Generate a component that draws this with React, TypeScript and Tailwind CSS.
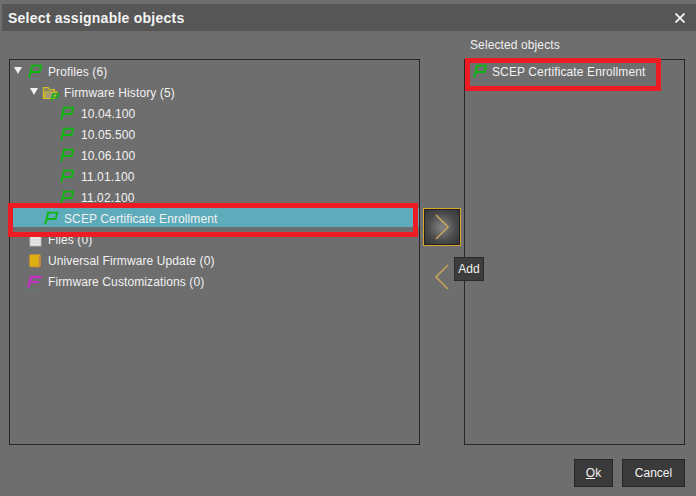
import React from "react";

const FONT = "font-['Liberation_Sans',Arial,sans-serif]";

function Flag({ color = "#0fb80f", large = false }: { color?: string; large?: boolean }) {
  return (
    <svg width="16" height="16" viewBox="0 0 16 16" fill="none">
      <path d="M6.4 1.6 H15.2 L13.6 8 H5.2" stroke={color} strokeWidth="1.8" strokeLinejoin="miter" />
      <path d="M6.4 0.8 L3.2 13.6" stroke={color} strokeWidth="2" />
      {large && <path d="M2 15 H12" stroke="#5b8a92" strokeWidth="0.9" />}
    </svg>
  );
}

function Folder() {
  return (
    <svg width="18" height="16" viewBox="0 0 18 16" fill="none">
      <path d="M1.5 13.5 V2.5 H6 L7.5 4.5 H12.5 V7" stroke="#d8c020" strokeWidth="1.2" fill="#8a8468" />
      <path d="M1.5 13.5 L4 7 H15 L12.5 13.5 Z" fill="#a39a78" stroke="#d8c020" strokeWidth="1.1" />
      <path d="M9.5 15.5 L11 9 H16.5 L15.6 12.5 H11" stroke="#0fb80f" strokeWidth="1.5" />
    </svg>
  );
}

function Doc() {
  return (
    <svg width="16" height="16" viewBox="0 0 16 16">
      <rect x="4" y="2" width="11" height="12" fill="#e6e6e6" stroke="#bdbdbd" strokeWidth="0.8" />
      <path d="M5.5 8H13.5M5.5 11H13.5" stroke="#d2d2d2" strokeWidth="1" />
    </svg>
  );
}

function Box() {
  return (
    <svg width="16" height="16" viewBox="0 0 16 16">
      <rect x="3.5" y="1.5" width="11" height="12.5" rx="1.5" fill="#dfae10" stroke="#bb8a3c" strokeWidth="1" />
      <path d="M13.3 2.5V13.5" stroke="#c48c40" strokeWidth="1.6" />
    </svg>
  );
}

function FIcon() {
  return (
    <svg width="16" height="16" viewBox="0 0 16 16" fill="none">
      <path d="M2.2 13.5 L5 3 H15.5" stroke="#c42cc4" strokeWidth="2.3" />
      <path d="M3.5 8 H12.5" stroke="#c42cc4" strokeWidth="2" />
      <path d="M1 15.5 H11" stroke="#5f8088" strokeWidth="0.9" />
    </svg>
  );
}

function Row({ indent, caret, icon, label, selected, iconWidth = "w-[22px]" }: { indent: string; caret?: boolean; icon: React.ReactNode; label: string; selected?: boolean; iconWidth?: string }) {
  return (
    <div className={`flex h-[21px] items-center ${indent} ${selected ? "bg-[linear-gradient(#5dabbb_19px,transparent_19px)]" : ""}`}>
      <span className="flex w-[16px] shrink-0 items-center justify-start pl-[4px]">
        {caret && <span className="h-0 w-0 -translate-y-[1px] border-x-[4px] border-t-[7px] border-x-transparent border-t-[#f0f0f0]" />}
      </span>
      <span className={`flex ${iconWidth} shrink-0 items-center`}>{icon}</span>
      <span className="whitespace-nowrap text-[12px] tracking-[0.11px] text-[#f2f2f2]">{label}</span>
    </div>
  );
}

export default function App() {
  return (
    <div className={`${FONT} flex h-[496px] w-[696px] flex-col bg-[#6e6e6e] pt-[4px]`}>
      <div className="ml-[2px] flex h-[27px] shrink-0 items-center justify-between bg-[#565656] pl-[6px] pr-[11px]">
        <span className="pt-[1px] text-[14px] font-bold tracking-[0.24px] text-[#f4f4f4]">Select assignable objects</span>
        <svg width="10" height="10" viewBox="0 0 10 10">
          <path d="M0.5 0.5L9.5 9.5M9.5 0.5L0.5 9.5" stroke="#f4f4f4" strokeWidth="1.8" />
        </svg>
      </div>

      <div className="flex flex-1 pl-[9px] pr-[11px]">
        <div className="mt-[28px] h-[386px] w-[411px] border border-[#262626] pt-[1px]">
          <Row indent="pl-[0px]" caret icon={<Flag large />} label="Profiles (6)" />
          <Row indent="pl-[16px]" caret icon={<Folder />} label="Firmware History (5)" />
          <Row indent="pl-[32px]" iconWidth="w-[23px]" icon={<Flag />} label="10.04.100" />
          <Row indent="pl-[32px]" iconWidth="w-[23px]" icon={<Flag />} label="10.05.500" />
          <Row indent="pl-[32px]" iconWidth="w-[23px]" icon={<Flag />} label="10.06.100" />
          <Row indent="pl-[32px]" iconWidth="w-[23px]" icon={<Flag />} label="11.01.100" />
          <Row indent="pl-[32px]" iconWidth="w-[23px]" icon={<Flag />} label="11.02.100" />
          <Row indent="pl-[16px]" icon={<Flag />} label="SCEP Certificate Enrollment" selected />
          <Row indent="pl-[0px]" icon={<Doc />} label="Files (0)" />
          <Row indent="pl-[0px]" icon={<Box />} label="Universal Firmware Update (0)" />
          <Row indent="pl-[0px]" icon={<FIcon />} label="Firmware Customizations (0)" />
        </div>

        <div className="flex w-[44px] shrink-0 flex-col items-center pt-[177px]">
          <div className="flex h-[38px] w-[38px] items-center justify-center border border-[#d9a62e] bg-[radial-gradient(circle,#858585_0%,#4a4a4a_55%,#333333_100%)] outline outline-1 -outline-offset-2 outline-[#222]">
            <svg width="14" height="26" viewBox="0 0 14 26" fill="none">
              <path d="M1 1L13 13L1 25" stroke="#c4a25c" strokeWidth="1.6" />
            </svg>
          </div>
          <svg width="14" height="26" viewBox="0 0 14 26" fill="none" className="mt-[18px]">
            <path d="M13 1L1 13L13 25" stroke="#c4a25c" strokeWidth="1.6" />
          </svg>
        </div>

        <div className="flex w-[221px] flex-col">
          <div className="mt-[4px] h-[24px] pl-[6px] text-[12px] leading-[21px] tracking-[0.11px] text-[#f0f0f0]">Selected objects</div>
          <div className="h-[386px] border border-[#262626] pt-[1px]">
            <div className="flex h-[21px] items-center pl-[6px]">
              <span className="flex w-[21px] shrink-0 items-center"><Flag /></span>
              <span className="whitespace-nowrap text-[12px] tracking-[0.11px] text-[#f2f2f2]">SCEP Certificate Enrollment</span>
            </div>
          </div>
        </div>
      </div>

      <div className="flex h-[51px] shrink-0 justify-end gap-[9px] pr-[11px] pt-[14px]">
        <button className="h-[28px] w-[39px] border border-[#262626] bg-[#3a3a3a] text-[12px] text-[#f2f2f2]"><span className="underline">O</span>k</button>
        <button className="h-[28px] w-[63px] border border-[#262626] bg-[#3a3a3a] text-[12px] text-[#f2f2f2]">Cancel</button>
      </div>

      <div className="absolute left-[454px] top-[257px] flex h-[24px] w-[30px] items-center justify-center border border-[#2a2a2a] bg-[#3d3d3d] text-[12px] text-[#f2f2f2]">Add</div>
      <div className="absolute left-[8px] top-[203px] h-[34px] w-[410px] border-[5px] border-[#ed1c24]" />
      <div className="absolute left-[465px] top-[58px] h-[33px] w-[196px] border-[5px] border-[#ed1c24]" />
    </div>
  );
}
